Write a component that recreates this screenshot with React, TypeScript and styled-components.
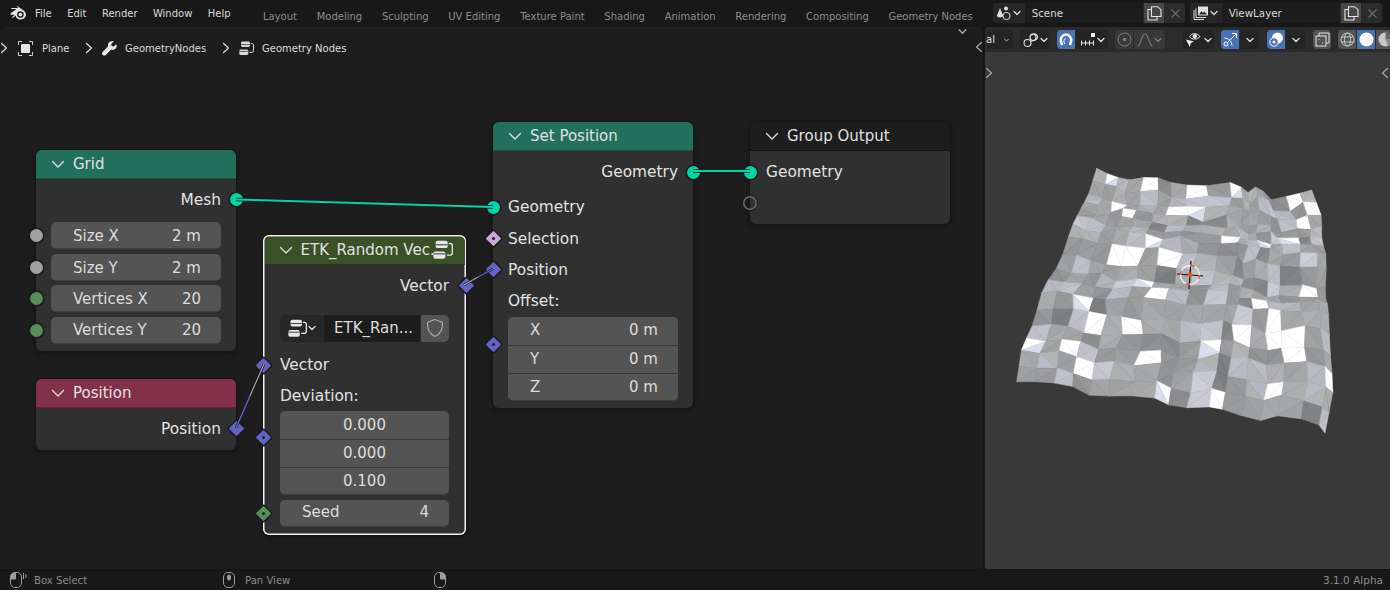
import React from "react";
import styled, { createGlobalStyle } from "styled-components";

const Global = createGlobalStyle`
  html, body { margin: 0; padding: 0; background: #161616; overflow: hidden; }
  * { box-sizing: border-box; }
  #root { width: 1390px; height: 590px; font-family: "DejaVu Sans", sans-serif; }
`;

const Page = styled.div`
  width: 1390px; height: 590px; display: flex; flex-direction: column; background: #161616;
`;
const TopBar = styled.div`
  height: 26px; flex: none; display: flex; align-items: flex-start; background: #181818; padding-left: 10px;
`;
const LogoSlot = styled.div`
  width: 25px; height: 26px; flex: none; display: flex; align-items: center; color: #e6e6e6;
`;
const Menu = styled.div`
  display: flex; gap: 15.4px; height: 26px; align-items: center; font-size: 10px; color: #d8d8d8; width: 228px; flex: none;
`;
const Tabs = styled.div`
  display: flex; gap: 19.7px; height: 32px; align-items: center; font-size: 10px; color: #8d8d8d; flex: none; white-space: nowrap;
`;
const SceneArea = styled.div`
  margin-left: auto; display: flex; gap: 5px; padding: 3px 8px 0 0;
`;
const SceneGroup = styled.div`
  width: 192px; height: 20px; display: flex; border-radius: 4px; overflow: hidden; background: #282828; gap: 1px;
`;
const SceneIcon = styled.div`
  width: 31px; background: #262626; color: #e0e0e0; display: flex; align-items: center; justify-content: center; gap: 1px;
`;
const SceneName = styled.div`
  width: 120px; background: #1d1d1d; color: #d8d8d8; font-size: 10.3px; padding-left: 7px; display: flex; align-items: center;
`;
const SceneBtn = styled.div<{ $on?: boolean }>`
  width: 20px; background: ${p => (p.$on ? "#474747" : "#2c2c2c")}; color: ${p => (p.$on ? "#e4e4e4" : "#6a6a6a")};
  display: flex; align-items: center; justify-content: center;
`;

const Main = styled.div`
  flex: 1; display: flex; margin-top: 1px; gap: 2px; min-height: 0;
`;
const NodeEditor = styled.div`
  width: 983px; flex: none; background: #1d1d1d; border-radius: 5px 5px 0 0; display: flex; flex-direction: column; position: relative; overflow: hidden;
`;
const Breadcrumb = styled.div`
  height: 41px; flex: none; display: flex; align-items: center; font-size: 10px; color: #dcdcdc; padding-top: 1px;
`;
const CrumbSlot = styled.div<{ $w: number }>`
  width: ${p => p.$w}px; flex: none; display: flex; align-items: center; justify-content: center; color: #dcdcdc;
`;
const CrumbText = styled.span<{ $w: number }>`
  width: ${p => p.$w}px; flex: none; white-space: nowrap;
`;
const EdgeMark = styled.div<{ $x: number; $y: number }>`
  position: absolute; left: ${p => p.$x}px; top: ${p => p.$y}px; color: #a8a8a8; display: flex;
`;
const Canvas = styled.div`
  flex: 1; position: relative;
`;
const Links = styled.svg`
  position: absolute; left: 0; top: 0; width: 983px; height: 501px; z-index: 3; pointer-events: none;
`;
const Node = styled.div<{ $x: number; $y: number; $w: number; $h: number; $sel?: boolean; $pad?: number }>`
  --pad: ${p => p.$pad ?? 15}px;
  position: absolute; left: ${p => p.$x}px; top: ${p => p.$y - 68}px; width: ${p => p.$w}px; height: ${p => p.$h}px;
  background: #303030; border-radius: 6px; z-index: 2;
  box-shadow: ${p => (p.$sel ? "0 0 0 1.5px #f0f0f0 inset, 0 2px 5px rgba(0,0,0,.5)" : "0 0 0 1px #161616, 0 2px 5px rgba(0,0,0,.45)")};
  color: #e2e2e2; font-size: 15.4px;
`;
const NodeHead = styled.div<{ $bg: string; $sel?: boolean }>`
  height: 29px; background: ${p => p.$bg}; border-bottom: 1px solid rgba(0,0,0,.28);
  border-radius: 6px 6px 0 0; display: flex; align-items: center; padding-left: 15px; gap: 8px; color: #e0e0e0; white-space: nowrap;
  font-size: 15px; position: relative;
  ${p => (p.$sel ? "margin: 1.5px 1.5px 0; height: 28px; padding-left: 14px; border-radius: 5px 5px 0 0;" : "")}
`;
const NodeBody = styled.div<{ $top?: number }>`
  padding: ${p => p.$top ?? 5}px var(--pad) 0; display: flex; flex-direction: column;
`;
const Row = styled.div<{ $right?: boolean; $h?: number; $mt?: number }>`
  position: relative; height: ${p => p.$h ?? 31.5}px; margin-top: ${p => p.$mt ?? 0}px; display: flex; align-items: center;
  justify-content: ${p => (p.$right ? "flex-end" : "flex-start")}; white-space: nowrap;
`;
const Socket = styled.i<{ $c: string; $right?: boolean; $shape?: "diamond" | "dot" | "hollow"; $dy?: number }>`
  --size: ${p => (p.$shape === "diamond" || p.$shape === "dot" ? 11 : p.$shape === "hollow" ? 14 : 13)}px;
  position: absolute; top: calc(50% + ${p => p.$dy ?? 0}px); ${p => (p.$right ? "right" : "left")}: calc(-1 * var(--pad));
  width: var(--size); height: var(--size);
  margin-top: calc(var(--size) / -2);
  ${p => (p.$right ? "margin-right" : "margin-left")}: calc(var(--size) / -2);
  background: ${p => (p.$shape === "hollow" ? "transparent" : p.$c)};
  border-radius: ${p => (p.$shape === "diamond" || p.$shape === "dot" ? "1px" : "50%")};
  transform: ${p => (p.$shape === "diamond" || p.$shape === "dot" ? "rotate(45deg)" : "none")};
  box-shadow: ${p => (p.$shape === "hollow" ? "inset 0 0 0 1.5px #6e6e6e, 0 0 0 1px #1a1a1a" : "0 0 0 1.5px #1a1a1a")};
  display: block; z-index: 4;
  &::after {
    content: ""; display: ${p => (p.$shape === "dot" ? "block" : "none")};
    width: 3px; height: 3px; margin: 4px; border-radius: 50%; background: #1c1c1c;
  }
`;
const Field = styled.div<{ $center?: boolean; $first?: boolean; $last?: boolean; $stack?: boolean; $nudge?: boolean; $lift?: boolean }>`
  flex: 1; height: 100%; background: #545454; display: flex; align-items: center; color: #dcdcdc; font-size: 15px;
  justify-content: ${p => (p.$center ? "center" : "space-between")};
  padding: ${p => (p.$nudge ? "1px" : "0")} ${p => (p.$center ? "0" : "20px")} ${p => (p.$lift ? "2px" : "0")} ${p => (p.$center ? "0" : "22px")};
  border-radius: ${p => (p.$stack ? `${p.$first ? "5px 5px" : "0 0"} ${p.$last ? "5px 5px" : "0 0"}` : "5px")};
  border-top: ${p => (p.$stack && !p.$first ? "1px solid #373737" : "none")};
  border-bottom: ${p => (p.$last || !p.$stack ? "1px solid #3e3e3e" : "none")};
`;
const Dropdown = styled.div`
  flex: 1; height: 100%; display: flex; border-radius: 5px; overflow: hidden; gap: 1px; background: #2a2a2a; font-size: 15px;
`;
const DropIcon = styled.div`
  width: 43px; background: #272727; color: #e6e6e6; display: flex; align-items: center; justify-content: center; gap: 1px;
`;
const DropName = styled.div`
  flex: 1; background: #1d1d1d; display: flex; align-items: center; padding-left: 10px; color: #dcdcdc;
`;
const DropBtn = styled.div`
  width: 28px; background: #545454; color: #a8a8a8; display: flex; align-items: center; justify-content: center;
`;
const HeadIcon = styled.div`
  position: absolute; right: 13px; top: 5px; color: #e6e6e6; display: flex;
`;

const Viewport = styled.div`
  flex: 1; background: #393939; border-radius: 5px 5px 0 0; display: flex; flex-direction: column; overflow: hidden; position: relative;
`;
const ViewHeader = styled.div`
  height: 25px; flex: none; background: #2b2b2b; display: flex; align-items: center; padding-left: 1px; gap: 7px; white-space: nowrap;
`;
const Group = styled.div<{ $ml?: number }>`
  display: flex; height: 19px; gap: 1px; border-radius: 4px; overflow: hidden; margin-left: ${p => p.$ml ?? 0}px; flex: none;
`;
const ViewBtn = styled.div<{ $w: number; $tone?: "blue" | "grey" | "mute" | "dark" }>`
  width: ${p => p.$w}px; display: flex; align-items: center; justify-content: center; gap: 1px; font-size: 10px;
  background: ${p => ({ blue: "#4772b3", grey: "#545454", mute: "#383838", dark: "#242424" }[p.$tone ?? "dark"])};
  color: ${p => (p.$tone === "mute" ? "#7c7c7c" : "#e6e6e6")};
`;
const ClippedBtn = styled(ViewBtn)`
  justify-content: flex-end; gap: 9px; padding-right: 4px; border-radius: 0 4px 4px 0;
`;
const Stage = styled.div`
  flex: 1; position: relative;
`;
const MeshSvg = styled.svg`
  position: absolute; left: 0; top: 0; width: 405px; height: 517px;
`;
const StatusBar = styled.div`
  height: 20px; flex: none; background: #181818; display: flex; align-items: center; font-size: 10.1px; color: #8a8a8a; margin-top: 1px;
`;
const StatusSlot = styled.div<{ $w: number; $pl?: number }>`
  width: ${p => p.$w}px; padding-left: ${p => p.$pl ?? 0}px; flex: none; display: flex; align-items: center; color: #9c9c9c;
`;
const StatusText = styled.span<{ $w: number }>`
  width: ${p => p.$w}px; flex: none; white-space: nowrap;
`;
const Version = styled.span`
  margin-left: auto; padding-right: 7px; font-size: 10.5px;
`;

/* ---------- icons ---------- */
type IP = { s?: number };
const Chevron = ({ s = 8 }: IP) => (
  <svg width={s} height={s} viewBox="0 0 8 8" fill="none" stroke="currentColor" strokeWidth="1.2" strokeLinecap="round" strokeLinejoin="round"><path d="M1 2.5 4 5.5 7 2.5" /></svg>
);
const HeadChevron = () => (
  <svg width="14" height="14" viewBox="0 0 14 14" fill="none" stroke="#dcdcdc" strokeWidth="1.4" strokeLinecap="round" strokeLinejoin="round"><path d="M1.5 4.5 7 10 12.5 4.5" /></svg>
);
const RightChev = () => (
  <svg width="8" height="12" viewBox="0 0 8 12" fill="none" stroke="currentColor" strokeWidth="1.2" strokeLinecap="round" strokeLinejoin="round"><path d="M1.5 1.5 6.5 6 1.5 10.5" /></svg>
);
const LeftChev = () => (
  <svg width="8" height="12" viewBox="0 0 8 12" fill="none" stroke="currentColor" strokeWidth="1.2" strokeLinecap="round" strokeLinejoin="round"><path d="M6.5 1.5 1.5 6 6.5 10.5" /></svg>
);
const BlenderLogo = () => (
  <svg width="17" height="14" viewBox="0 0 17 14">
    <path fill="currentColor" d="M0.6 7.2 6.6 3 1.7 3C1 3 1 2 1.7 1.9L8.6 1.9 7 0.6C6.6.2 7.2-.2 7.7.2L13.6 4.6C16.4 6.6 16.6 10.2 14.4 12.1 12 14.2 8 14 6.4 11.5 6 10.9 5.8 10.2 5.8 9.6L3 11.7C2.4 12.2 1.6 11.5 2.2 10.9L4.8 8.8 1.3 8.8C.5 8.8.2 7.6.6 7.2Z" />
    <circle cx="10.4" cy="8.6" r="3.3" fill="#181818" />
    <circle cx="10.4" cy="8.6" r="1.9" fill="currentColor" />
  </svg>
);
const ObjectIcon = () => (
  <svg width="15" height="15" viewBox="0 0 15 15" fill="none" stroke="#cfcfcf" strokeWidth="1"><path d="M.5 4V.5H4M11 .5h3.5V4M14.5 11v3.5H11M4 14.5H.5V11" /><rect x="3" y="3" width="9" height="9" rx="1" fill="#e6e6e6" stroke="none" /></svg>
);
const Wrench = () => (
  <svg width="15" height="15" viewBox="0 0 15 15"><path fill="#e6e6e6" d="M14.4 3.2 11.6 5.6 9.6 5 9.2 3 11.9.6C10.2-.2 8.2.1 7.1 1.3 6 2.4 5.7 4 6.2 5.3L.8 10.7C-.2 11.7-.2 13 .6 13.9 1.6 14.9 2.9 14.8 3.8 13.9L9.2 8.6C10.6 9.2 12.2 8.9 13.4 7.8 14.6 6.6 14.9 4.7 14.4 3.2Z" /></svg>
);
const TreeIcon = ({ s = 15 }: IP) => (
  <svg width={s} height={s} viewBox="0 0 15 15" fill="none">
    <rect x="2" y=".6" width="9" height="5.4" rx="1.4" fill="currentColor" />
    <path d="M2 3.6H11" stroke="#2a2a2a" strokeWidth=".7" />
    <rect x=".3" y="8.6" width="9" height="5.4" rx="1.4" fill="currentColor" />
    <path d="M.3 10.4H9.3" stroke="#2a2a2a" strokeWidth=".7" />
    <path d="M11.8 2.6H13c.9 0 1.5.6 1.5 1.5v5.6c0 1-.6 1.6-1.5 1.6H10.4" stroke="currentColor" strokeWidth="1" />
  </svg>
);
const SceneGlyph = () => (
  <svg width="16" height="15" viewBox="0 0 16 15" fill="none">
    <path d="M4 2 7.2 9.5C7.2 12 1 12 1 9.5Z" fill="currentColor" />
    <circle cx="10" cy="2.5" r="2" fill="currentColor" />
    <circle cx="10.5" cy="10" r="3.6" stroke="currentColor" strokeWidth="1" fill="#262626" />
  </svg>
);
const LayerGlyph = () => (
  <svg width="16" height="15" viewBox="0 0 16 15" fill="none" stroke="currentColor" strokeWidth="1">
    <path d="M1 4v9.5h10M3 2.5v9h10" /><rect x="5" y=".5" width="10" height="9" fill="currentColor" stroke="none" />
    <path d="M6 8.5 8.5 5 10 7 11.5 5.5 14 8.5Z" fill="#262626" stroke="none" />
  </svg>
);
const Copy = () => (
  <svg width="15" height="15" viewBox="0 0 15 15" fill="none" stroke="currentColor" strokeWidth="1.1"><path d="M4.5 3.5H1v10.5h9V10.5" /><path d="M4.5.7h6l3.5 3v6.8H4.5Z" /></svg>
);
const Cross = () => (
  <svg width="11" height="11" viewBox="0 0 11 11" stroke="currentColor" strokeWidth="1.2"><path d="M1.5 1.5 9.5 9.5M9.5 1.5 1.5 9.5" /></svg>
);
const LinkIcon = () => (
  <svg width="16" height="16" viewBox="0 0 16 16" fill="none" stroke="currentColor" strokeWidth="1.1"><circle cx="4.5" cy="11" r="3.5" /><path d="M7 3.5C8.5 1 14 1 14.5 4.5 15 7.5 11 9 8 9" /><circle cx="10" cy="5.5" r="3" /></svg>
);
const Magnet = () => (
  <svg width="16" height="16" viewBox="0 0 16 16" fill="none" stroke="#fff" strokeWidth="2.6"><path d="M4 13 3 9.5C2 6 4.5 2.5 8 2.5s6 3.5 5 7L12 13" /><path d="M6.5 12 6 9.5C5.7 8 6.7 6.5 8 6.5" strokeWidth="1" /></svg>
);
const SnapIcon = () => (
  <svg width="16" height="15" viewBox="0 0 16 15" fill="none" stroke="#e6e6e6" strokeWidth="1"><path d="M1 11h13M1.5 8.5v5M5.5 8.5v5M9.5 8.5v5M13.5 8.5v5" /><rect x="11" y="1" width="4" height="4" fill="#fff" stroke="none" /></svg>
);
const PropDot = () => (
  <svg width="15" height="15" viewBox="0 0 15 15" fill="none"><circle cx="7.5" cy="7.5" r="6.5" stroke="#7c7c7c" /><circle cx="7.5" cy="7.5" r="1.8" fill="#7c7c7c" /></svg>
);
const Bell = () => (
  <svg width="16" height="14" viewBox="0 0 16 14" fill="none" stroke="#7c7c7c" strokeWidth="1.1"><path d="M.5 13C4 13 4.5 1 8 1s4 12 7.5 12" /></svg>
);
const EyeCursor = () => (
  <svg width="18" height="16" viewBox="0 0 18 16" fill="none">
    <path d="M4.5 4.5C7 .8 12 .8 15 4.5 12 8 7 8 4.5 4.5Z" stroke="#f0f0f0" strokeWidth="1" />
    <circle cx="9.8" cy="4.3" r="2.1" fill="#f0f0f0" />
    <path d="M1 7.5 9 9.5 5.8 11 4.8 15Z" fill="#f0f0f0" />
  </svg>
);
const GizmoIcon = () => (
  <svg width="15" height="15" viewBox="0 0 15 15" fill="none" stroke="#fff" strokeWidth="1"><circle cx="3" cy="12" r="2" /><path d="M4.5 10.5 13 2M9 1.5h4.5V6" /><path d="M1.5 6c4 0 7.5 3.5 7.5 7.5" /></svg>
);
const OverlayIcon = () => (
  <svg width="16" height="16" viewBox="0 0 16 16" fill="none"><circle cx="9.5" cy="6" r="5.5" fill="#fff" /><circle cx="6" cy="10" r="4.2" fill="#4772b3" stroke="#fff" /><circle cx="6" cy="10" r="1.5" fill="#fff" /></svg>
);
const XrayIcon = () => (
  <svg width="15" height="15" viewBox="0 0 15 15" fill="none" stroke="#e6e6e6" strokeWidth="1"><path d="M4 4V1h10v10h-3" /><rect x="1" y="4" width="10" height="10" /><path d="M4 7v1M8 11H7" /></svg>
);
const WireIcon = () => (
  <svg width="15" height="15" viewBox="0 0 15 15" fill="none" stroke="#d0d0d0" strokeWidth=".9"><circle cx="7.5" cy="7.5" r="6.5" /><ellipse cx="7.5" cy="7.5" rx="3" ry="6.5" /><path d="M1.5 5h12M1.5 10h12" /></svg>
);
const SolidIcon = () => (
  <svg width="15" height="15" viewBox="0 0 15 15"><circle cx="7.5" cy="7.5" r="7" fill="#fff" /></svg>
);
const MatIcon = () => (
  <svg width="15" height="15" viewBox="0 0 15 15"><circle cx="7.5" cy="7.5" r="7" fill="#c8c8c8" /><path d="M7.5 7.5V.5A7 7 0 0 1 14.5 7.5Z" fill="#666" /><path d="M7.5 7.5H14.5A7 7 0 0 1 10 14Z" fill="#8c8c8c" /></svg>
);
const Shield = () => (
  <svg width="20" height="20" viewBox="0 0 20 20" fill="none" stroke="currentColor" strokeWidth="1.2"><path d="M10 1.5 17.5 4.5C18 11 15 16 10 18.5 5 16 2 11 2.5 4.5Z" /></svg>
);
const Mouse = ({ side, drag }: { side: "l" | "m" | "r"; drag?: boolean }) => (
  <svg width={drag ? 17 : 12} height="16" viewBox={drag ? "0 0 17 16" : "0 0 12 16"} fill="none" stroke="currentColor" strokeWidth="1">
    <rect x=".5" y=".5" width="11" height="15" rx="4.5" />
    {side === "l" && <path d="M1 7V3.5C1 2 2.5 1 5.5 1v6Z" fill="currentColor" />}
    {side === "r" && <path d="M11 7V3.5C11 2 9.5 1 6.5 1v6Z" fill="currentColor" />}
    {side === "m" && <rect x="4.5" y="3" width="3" height="5" rx="1.5" fill="currentColor" />}
    {drag && <path d="M13.5 1v6M16 2v4" />}
  </svg>
);

/* ---------- mesh ---------- */
type P = [number, number];
const z2p = (p: P): P => [1000 + p[0] / 3, 150 + p[1] / 3];
const top: P[] = ([[290, 55], [340, 80], [390, 90], [460, 78], [520, 100], [600, 110], [710, 95], [740, 130], [775, 105], [810, 150], [880, 135], [935, 120]] as P[]).map(z2p);
const bottom: P[] = ([[50, 695], [130, 695], [210, 705], [280, 742], [370, 735], [470, 745], [525, 775], [625, 770], [680, 780], [770, 815], [840, 795], [950, 815], [975, 850]] as P[]).map(z2p);
const left: P[] = ([[290, 55], [265, 135], [240, 180], [215, 230], [180, 340], [130, 410], [100, 520], [65, 595], [50, 695]] as P[]).map(z2p);
const right: P[] = ([[935, 120], [965, 200], [965, 270], [980, 320], [975, 440], [985, 470], [990, 600], [1000, 720], [975, 850]] as P[]).map(z2p);

const along = (c: P[], t: number): P => {
  const f = t * (c.length - 1);
  const i = Math.min(Math.floor(f), c.length - 2);
  const k = f - i;
  return [c[i][0] + (c[i + 1][0] - c[i][0]) * k, c[i][1] + (c[i + 1][1] - c[i][1]) * k];
};
const coons = (s: number, t: number): P => {
  const T = along(top, s), B = along(bottom, s), L = along(left, t), R = along(right, t);
  const a = top[0], b = top[top.length - 1], c = bottom[0], d = bottom[bottom.length - 1];
  const f = (i: 0 | 1) =>
    (1 - t) * T[i] + t * B[i] + (1 - s) * L[i] + s * R[i] -
    ((1 - s) * (1 - t) * a[i] + s * (1 - t) * b[i] + (1 - s) * t * c[i] + s * t * d[i]);
  return [f(0), f(1)];
};
const makeRng = (seed: number) => () => {
  seed = (seed * 1664525 + 1013904223) % 4294967296;
  return seed / 4294967296;
};
const whites: P[] = [[445, 100], [345, 95], [585, 122], [695, 115], [530, 185], [605, 200], [375, 200], [870, 170], [935, 175], [890, 225], [865, 265], [670, 275], [470, 280], [785, 290], [330, 330], [415, 325], [505, 305], [435, 405], [470, 440], [260, 445], [930, 415], [310, 530], [405, 548], [105, 590], [185, 595], [265, 650], [420, 632], [620, 608], [905, 610], [860, 590], [495, 750], [650, 750], [965, 705], [810, 735], [820, 490], [775, 480], [725, 540], [815, 545], [385, 292], [350, 160]];

const buildMesh = () => {
  const N = 17;
  const rng = makeRng(4);
  const pts: P[][] = [];
  const h: number[][] = [];
  for (let j = 0; j <= N; j++) {
    pts[j] = []; h[j] = [];
    for (let i = 0; i <= N; i++) {
      const edge = i === 0 || j === 0 || i === N || j === N;
      const [x, y] = coons(i / N, j / N);
      const a = edge ? 0 : 5;
      pts[j][i] = [x + (rng() - .5) * a, y + (rng() - .5) * a * 1.4];
      h[j][i] = rng();
    }
  }
  const marked = new Set<number>();
  const centre = (i: number, j: number): P => {
    const q = [pts[j][i], pts[j][i + 1], pts[j + 1][i + 1], pts[j + 1][i]];
    return [q.reduce((a, p) => a + p[0], 0) / 4, q.reduce((a, p) => a + p[1], 0) / 4];
  };
  whites.forEach(zc => {
    const c = z2p(zc);
    let best = 0, bd = 1e9;
    for (let j = 0; j < N; j++) for (let i = 0; i < N; i++) {
      const m = centre(i, j);
      const d = (m[0] - c[0]) ** 2 + (m[1] - c[1]) ** 2;
      if (d < bd) { bd = d; best = j * N + i; }
    }
    marked.add(best);
  });
  const str = (t: P[]) => t.map(p => p.map(n => n.toFixed(1)).join(",")).join(" ");
  const faces: { d: string; c: string }[] = [];
  const grey = (v: number) => {
    const k = Math.max(0, Math.min(1, v));
    const g = Math.round(122 + k * 82);
    return `rgb(${g},${g + 1},${g + (k > .72 ? 10 : 3)})`;
  };
  for (let j = 0; j < N; j++) for (let i = 0; i < N; i++) {
    const a = pts[j][i], b = pts[j][i + 1], c = pts[j + 1][i + 1], d = pts[j + 1][i];
    const ds = (h[j][i + 1] + h[j + 1][i + 1] - h[j][i] - h[j + 1][i]) / 2;
    const dt = (h[j + 1][i] + h[j + 1][i + 1] - h[j][i] - h[j][i + 1]) / 2;
    const v = .52 + ds * .55 - dt * .45;
    const fold = (rng() - .5) * .08;
    const flip = rng() > .5;
    const isWhite = marked.has(j * N + i);
    const half = rng() > .8;
    const c1 = isWhite ? "#ffffff" : grey(v + fold);
    const c2 = isWhite ? (half ? "#d9deea" : "#ffffff") : grey(v - fold);
    const t1: P[] = flip ? [a, b, c] : [a, b, d];
    const t2: P[] = flip ? [a, c, d] : [b, c, d];
    faces.push({ d: str(t1), c: c1 }, { d: str(t2), c: c2 });
  }
  return faces;
};
const meshFaces = buildMesh();

const Head = ({ bg, title, sel }: { bg: string; title: string; sel?: boolean }) => (
  <NodeHead $bg={bg} $sel={sel}><HeadChevron /><span>{title}</span></NodeHead>
);

const GEO = "#00d6a3", GREY = "#a1a1a1", INT = "#598c5c", VEC = "#6363c7", BOOL = "#cca6d6";

export default function App() {
  return (
    <Page>
      <Global />
      <TopBar>
        <LogoSlot><BlenderLogo /></LogoSlot>
        <Menu>
          <span>File</span><span>Edit</span><span>Render</span><span>Window</span><span>Help</span>
        </Menu>
        <Tabs>
          {["Layout", "Modeling", "Sculpting", "UV Editing", "Texture Paint", "Shading", "Animation", "Rendering", "Compositing", "Geometry Nodes"].map(t => <span key={t}>{t}</span>)}
        </Tabs>
        <SceneArea>
          <SceneGroup>
            <SceneIcon><SceneGlyph /><Chevron /></SceneIcon>
            <SceneName>Scene</SceneName>
            <SceneBtn $on><Copy /></SceneBtn>
            <SceneBtn><Cross /></SceneBtn>
          </SceneGroup>
          <SceneGroup>
            <SceneIcon><LayerGlyph /><Chevron /></SceneIcon>
            <SceneName>ViewLayer</SceneName>
            <SceneBtn $on><Copy /></SceneBtn>
            <SceneBtn><Cross /></SceneBtn>
          </SceneGroup>
        </SceneArea>
      </TopBar>
      <Main>
        <NodeEditor>
          <Breadcrumb>
            <CrumbSlot $w={8}><RightChev /></CrumbSlot>
            <CrumbSlot $w={34}><ObjectIcon /></CrumbSlot>
            <CrumbText $w={43}>Plane</CrumbText>
            <CrumbSlot $w={8}><RightChev /></CrumbSlot>
            <CrumbSlot $w={32}><Wrench /></CrumbSlot>
            <CrumbText $w={97}>GeometryNodes</CrumbText>
            <CrumbSlot $w={8}><RightChev /></CrumbSlot>
            <CrumbSlot $w={32}><TreeIcon /></CrumbSlot>
            <span>Geometry Nodes</span>
          </Breadcrumb>
          <EdgeMark $x={958} $y={0}><Chevron s={9} /></EdgeMark>
          <EdgeMark $x={975} $y={14}><LeftChev /></EdgeMark>
          <Canvas>
            <Links viewBox="0 68 983 501" fill="none">
              <path d="M236 199.5 493 207" stroke="#1a1a1a" strokeWidth="3.5" />
              <path d="M236 199.5 493 207" stroke={GEO} strokeWidth="2" />
              <path d="M693 171H750" stroke="#1a1a1a" strokeWidth="3.5" />
              <path d="M693 171H750" stroke={GEO} strokeWidth="2" />
              <path d="M236 428 264 364" stroke="#1a1a1a" strokeWidth="2.5" />
              <path d="M236 428 250 396" stroke={VEC} strokeWidth="1.4" />
              <path d="M250 396 264 364" stroke="#a3a3a3" strokeWidth="1.2" />
              <path d="M464 285 493 269" stroke="#1a1a1a" strokeWidth="2.5" />
              <path d="M464 285 478 277" stroke="#a3a3a3" strokeWidth="1.2" />
              <path d="M478 277 493 269" stroke={VEC} strokeWidth="1.4" />
            </Links>

            <Node $x={36} $y={150} $w={200} $h={201}>
              <Head bg="#22705c" title="Grid" />
              <NodeBody>
                <Row $right $h={31}>Mesh<Socket $c={GEO} $right /></Row>
                <Row $h={27} $mt={7}><Socket $c={GREY} /><Field $nudge><span>Size X</span><span>2 m</span></Field></Row>
                <Row $h={27} $mt={5}><Socket $c={GREY} /><Field $nudge><span>Size Y</span><span>2 m</span></Field></Row>
                <Row $h={27} $mt={4}><Socket $c={INT} /><Field $nudge><span>Vertices X</span><span>20</span></Field></Row>
                <Row $h={27} $mt={5}><Socket $c={INT} /><Field><span>Vertices Y</span><span>20</span></Field></Row>
              </NodeBody>
            </Node>

            <Node $x={36} $y={379} $w={200} $h={71}>
              <Head bg="#83314a" title="Position" />
              <NodeBody $top={5}>
                <Row $right $h={31}>Position<Socket $c={VEC} $right $shape="diamond" /></Row>
              </NodeBody>
            </Node>

            <Node $x={263} $y={235} $w={203} $h={300} $sel $pad={17}>
              <Head bg="#3c5028" title="ETK_Random Vec." sel />
              <HeadIcon><TreeIcon s={20} /></HeadIcon>
              <NodeBody $top={5}>
                <Row $right $h={32}>Vector<Socket $c={VEC} $right $shape="diamond" /></Row>
                <Row $h={27} $mt={13}>
                  <Dropdown>
                    <DropIcon><TreeIcon s={19} /><Chevron /></DropIcon>
                    <DropName>ETK_Ran...</DropName>
                    <DropBtn><Shield /></DropBtn>
                  </Dropdown>
                </Row>
                <Row $h={31} $mt={8}><Socket $c={VEC} $shape="diamond" />Vector</Row>
                <Row $h={30}>Deviation:</Row>
                <Row $h={28}><Socket $c={VEC} $shape="dot" $dy={13} /><Field $center $stack $first>0.000</Field></Row>
                <Row $h={28}><Field $center $stack>0.000</Field></Row>
                <Row $h={28}><Field $center $stack $last>0.100</Field></Row>
                <Row $h={27} $mt={5}><Socket $c={INT} $shape="dot" /><Field $lift><span>Seed</span><span>4</span></Field></Row>
              </NodeBody>
            </Node>

            <Node $x={493} $y={122} $w={200} $h={286}>
              <Head bg="#22705c" title="Set Position" />
              <NodeBody $top={5}>
                <Row $right $h={32}>Geometry<Socket $c={GEO} $right /></Row>
                <Row $h={32} $mt={3}><Socket $c={GEO} />Geometry</Row>
                <Row $h={31}><Socket $c={BOOL} $shape="dot" />Selection</Row>
                <Row $h={31.5}><Socket $c={VEC} $shape="diamond" />Position</Row>
                <Row $h={31.5}>Offset:</Row>
                <Row $h={28}><Socket $c={VEC} $shape="dot" $dy={13} /><Field $stack $first $lift><span>X</span><span>0 m</span></Field></Row>
                <Row $h={28}><Field $stack $lift><span>Y</span><span>0 m</span></Field></Row>
                <Row $h={28}><Field $stack $last><span>Z</span><span>0 m</span></Field></Row>
              </NodeBody>
            </Node>

            <Node $x={750} $y={122} $w={200} $h={102} $pad={16}>
              <Head bg="#1d1d1d" title="Group Output" />
              <NodeBody $top={5}>
                <Row $h={32}><Socket $c={GEO} />Geometry</Row>
                <Row $h={30}><Socket $c="" $shape="hollow" /></Row>
              </NodeBody>
            </Node>
          </Canvas>
        </NodeEditor>

        <Viewport>
          <ViewHeader>
            <Group><ClippedBtn $w={27}>al<Chevron /></ClippedBtn></Group>
            <Group><ViewBtn $w={30}><LinkIcon /><Chevron /></ViewBtn></Group>
            <Group>
              <ViewBtn $w={18} $tone="blue"><Magnet /></ViewBtn>
              <ViewBtn $w={32}><SnapIcon /><Chevron /></ViewBtn>
            </Group>
            <Group>
              <ViewBtn $w={18} $tone="mute"><PropDot /></ViewBtn>
              <ViewBtn $w={31} $tone="mute"><Bell /><Chevron /></ViewBtn>
            </Group>
            <Group $ml={11}><ViewBtn $w={31}><EyeCursor /><Chevron /></ViewBtn></Group>
            <Group>
              <ViewBtn $w={18} $tone="blue"><GizmoIcon /></ViewBtn>
              <ViewBtn $w={19}><Chevron /></ViewBtn>
            </Group>
            <Group $ml={1}>
              <ViewBtn $w={18} $tone="blue"><OverlayIcon /></ViewBtn>
              <ViewBtn $w={19}><Chevron /></ViewBtn>
            </Group>
            <Group $ml={1}><ViewBtn $w={18} $tone="grey"><XrayIcon /></ViewBtn></Group>
            <Group>
              <ViewBtn $w={18} $tone="grey"><WireIcon /></ViewBtn>
              <ViewBtn $w={18} $tone="blue"><SolidIcon /></ViewBtn>
              <ViewBtn $w={18} $tone="grey"><MatIcon /></ViewBtn>
            </Group>
          </ViewHeader>
          <Stage>
            <MeshSvg viewBox="985 52 405 517">
              {meshFaces.map((f, i) => <polygon key={i} points={f.d} fill={f.c} stroke={f.c} strokeWidth=".5" />)}
              <g transform="translate(1190 275)">
                <path d="M-13 -1 13 1M1 -14 -1 14" stroke="#111" strokeWidth="1.2" />
                <circle r="9.5" fill="none" stroke="#f2f2f2" strokeWidth="1.3" />
                <circle r="9.5" fill="none" stroke="#e0502e" strokeWidth="1.3" strokeDasharray="4 11" />
                <circle r="2.4" fill="#e0562e" />
              </g>
            </MeshSvg>
            <EdgeMark $x={0} $y={15}><RightChev /></EdgeMark>
            <EdgeMark $x={396} $y={15}><LeftChev /></EdgeMark>
          </Stage>
        </Viewport>
      </Main>
      <StatusBar>
        <StatusSlot $w={34} $pl={10}><Mouse side="l" drag /></StatusSlot>
        <StatusText $w={189}>Box Select</StatusText>
        <StatusSlot $w={22}><Mouse side="m" /></StatusSlot>
        <StatusText $w={189}>Pan View</StatusText>
        <StatusSlot $w={22}><Mouse side="r" /></StatusSlot>
        <Version>3.1.0 Alpha</Version>
      </StatusBar>
    </Page>
  );
}
